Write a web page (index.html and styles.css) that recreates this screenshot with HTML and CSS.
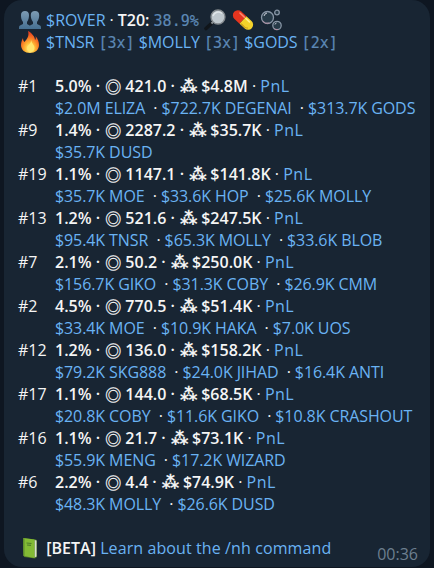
FILE: index.html
```
<!DOCTYPE html>
<html lang="en">
<head>
  <meta charset="UTF-8">
  <meta name="viewport" content="width=device-width, initial-scale=1.0">
  <title>$ROVER T20</title>
  <link rel="stylesheet" href="styles.css">
</head>
<body>
  <div class="message">
    <div class="line">
      <svg class="emoji" viewBox="0 0 22 22">
        <defs>
          <linearGradient id="people" x1="0" y1="0" x2="0" y2="1">
            <stop offset="0" stop-color="#7d9bb3"/>
            <stop offset="1" stop-color="#456f91"/>
          </linearGradient>
        </defs>
        <g fill="url(#people)">
          <path d="M6 2C3.500 2 2 3.500 2 6c0 2 .2 5 2 7v2l-3 1.500C0 17 0 18 0 20h12c0-2-.500-3-1.500-3.500L8 15v-2c1.700-2 2-5 2-7 0-2.500-1.500-4-4-4z"/>
          <path d="M16 2c-2.700 0-4.200 1.500-4.200 4 0 2 .4 5 2.200 7v2l-3 1.500c-1 .5-1 1.500-1 3.500h12c0-2 0-3-1-3.500L18 15v-2c1.800-2 2.200-5 2.200-7 0-2.500-1.500-4-4.200-4z"/>
        </g>
      </svg>
      <a class="link">$ROVER</a> · <b>T20:</b> <code>38.9%</code>
      <svg class="emoji" viewBox="0 0 22 22">
        <path d="M8.500 13.500l-6.500 6" stroke="#10151a" stroke-width="3.600" stroke-linecap="round"/>
        <path d="M10 12l-2.500 2.500" stroke="#8c9398" stroke-width="2"/>
        <circle cx="14" cy="8" r="7" fill="#bfc8ce" stroke="#83898d" stroke-width="1.300"/>
        <path d="M9 7a5.500 5.500 0 0 1 9-2.500" fill="none" stroke="#e1e6e9" stroke-width="1.500"/>
      </svg>
      <svg class="emoji" viewBox="0 0 22 22">
        <g transform="rotate(43 11 11)">
          <path d="M11 6H4a5 5 0 0 0 0 10h7z" fill="#e5351f"/>
          <path d="M11 6h7a5 5 0 0 1 0 10h-7z" fill="#f3d22b"/>
          <path d="M4 8h6" stroke="#ff8a70" stroke-width="1.500" stroke-linecap="round"/>
          <path d="M12 8h5" stroke="#fff08a" stroke-width="1.500" stroke-linecap="round"/>
          <path d="M12 15h5a4 4 0 0 0 3-1.500" stroke="#c9981a" fill="none"/>
        </g>
      </svg>
      <svg class="emoji" viewBox="0 0 22 22">
        <g fill="#263947" stroke="#8795a5" stroke-width="1.300">
          <circle cx="7.500" cy="8.500" r="6"/>
          <circle cx="17" cy="3.500" r="2.300"/>
          <circle cx="17" cy="16.500" r="4.200"/>
        </g>
        <path d="M4 7a4 4 0 0 1 3-3M15 15.500a2 2 0 0 1 1.500-1.500" fill="none" stroke="#c9cdd7"/>
        <path d="M2.500 12a6 6 0 0 0 7 2M14 19.500a4 4 0 0 0 4 1" fill="none" stroke="#b08b9f"/>
      </svg>
    </div>
    <div class="line">
      <svg class="emoji" viewBox="0 0 22 22">
        <defs>
          <radialGradient id="flame" cx=".5" cy=".8" r=".75">
            <stop offset="0" stop-color="#fff5a8"/>
            <stop offset=".35" stop-color="#ffbd36"/>
            <stop offset=".65" stop-color="#f87825"/>
            <stop offset="1" stop-color="#e33b20"/>
          </radialGradient>
        </defs>
        <path d="M9 0c4 2 7 6 7 9 1-1 1-2.500.500-4C19 8 20 11 20 14c0 5-4 8-9 8s-9-3-9-8c0-3 1-5 2-7 0 2 .5 3 1.500 4C8 8 10.500 5 9 0z" fill="url(#flame)"/>
        <path d="M12 9c.5 4-4 5-4 8 0 2 1.500 4 3.500 4s4-1.500 4-4c0-3-2.500-4-3.500-8z" fill="#ffe66d"/>
      </svg>
      <a class="link">$TNSR</a> <code>[3x]</code> <a class="link">$MOLLY</a> <code>[3x]</code> <a class="link">$GODS</a> <code>[2x]</code>
    </div>

    <div class="holders">
      <span>#1</span>
      <div><b>5.0% · <i class="sol">◎</i> 421.0 · <i class="stars">⁂</i> $4.8M</b> · <a class="link pnl">PnL</a></div>
      <div class="tokens"><a class="link">$2.0M ELIZA</a> &nbsp;· <a class="link">$722.7K DEGENAI</a> &nbsp;· <a class="link">$313.7K GODS</a></div>

      <span>#9</span>
      <div><b>1.4% · <i class="sol">◎</i> 2287.2 · <i class="stars">⁂</i> $35.7K</b> · <a class="link pnl">PnL</a></div>
      <div class="tokens"><a class="link">$35.7K DUSD</a></div>

      <span>#19</span>
      <div><b>1.1% · <i class="sol">◎</i> 1147.1 · <i class="stars">⁂</i> $141.8K</b> · <a class="link pnl">PnL</a></div>
      <div class="tokens"><a class="link">$35.7K MOE</a> &nbsp;· <a class="link">$33.6K HOP</a> &nbsp;· <a class="link">$25.6K MOLLY</a></div>

      <span>#13</span>
      <div><b>1.2% · <i class="sol">◎</i> 521.6 · <i class="stars">⁂</i> $247.5K</b> · <a class="link pnl">PnL</a></div>
      <div class="tokens"><a class="link">$95.4K TNSR</a> &nbsp;· <a class="link">$65.3K MOLLY</a> &nbsp;· <a class="link">$33.6K BLOB</a></div>

      <span>#7</span>
      <div><b>2.1% · <i class="sol">◎</i> 50.2 · <i class="stars">⁂</i> $250.0K</b> · <a class="link pnl">PnL</a></div>
      <div class="tokens"><a class="link">$156.7K GIKO</a> &nbsp;· <a class="link">$31.3K COBY</a> &nbsp;· <a class="link">$26.9K CMM</a></div>

      <span>#2</span>
      <div><b>4.5% · <i class="sol">◎</i> 770.5 · <i class="stars">⁂</i> $51.4K</b> · <a class="link pnl">PnL</a></div>
      <div class="tokens"><a class="link">$33.4K MOE</a> &nbsp;· <a class="link">$10.9K HAKA</a> &nbsp;· <a class="link">$7.0K UOS</a></div>

      <span>#12</span>
      <div><b>1.2% · <i class="sol">◎</i> 136.0 · <i class="stars">⁂</i> $158.2K</b> · <a class="link pnl">PnL</a></div>
      <div class="tokens"><a class="link">$79.2K SKG888</a> &nbsp;· <a class="link">$24.0K JIHAD</a> &nbsp;· <a class="link">$16.4K ANTI</a></div>

      <span>#17</span>
      <div><b>1.1% · <i class="sol">◎</i> 144.0 · <i class="stars">⁂</i> $68.5K</b> · <a class="link pnl">PnL</a></div>
      <div class="tokens"><a class="link">$20.8K COBY</a> &nbsp;· <a class="link">$11.6K GIKO</a> &nbsp;· <a class="link">$10.8K CRASHOUT</a></div>

      <span>#16</span>
      <div><b>1.1% · <i class="sol">◎</i> 21.7 · <i class="stars">⁂</i> $73.1K</b> · <a class="link pnl">PnL</a></div>
      <div class="tokens"><a class="link">$55.9K MENG</a> &nbsp;· <a class="link">$17.2K WIZARD</a></div>

      <span>#6</span>
      <div><b>2.2% · <i class="sol">◎</i> 4.4 · <i class="stars">⁂</i> $74.9K</b> · <a class="link pnl">PnL</a></div>
      <div class="tokens"><a class="link">$48.3K MOLLY</a> &nbsp;· <a class="link">$26.6K DUSD</a></div>
    </div>

    <div class="footer">
      <div>
        <svg class="emoji" viewBox="0 0 22 22">
          <path d="M4 1l13 1.500 1 1V20l-2 1.500L5 20z" fill="#4d7528"/>
          <path d="M15.500 3l2 .5v16l-2 1z" fill="#d9ddd2"/>
          <path d="M4 1l11.500 1.500v18.500L4.500 19z" fill="#83bb35"/>
          <path d="M4 1l1.500.200V19l-1-.200z" fill="#5c8d2b"/>
          <path d="M7.500 6l5 .5M8 8l4 .400" stroke="#4f7d2b" stroke-width="1.200"/>
        </svg>
        <b>[BETA]</b> <a class="link">Learn about the /nh command</a>
      </div>
      <span class="time">00:36</span>
    </div>
  </div>
</body>
</html>
```
FILE: styles.css
```
body {
  margin: 0;
  height: 568px;
  overflow: hidden;
  background: #0e1621;
  color: #f5f5f5;
  font-family: "Open Sans", "Noto Sans", sans-serif;
  font-size: 16px;
  line-height: 22px;
}
.message {
  box-sizing: border-box;
  width: 426px;
  height: 567px;
  margin-left: 4px;
  padding: 9px 12px 0 14px;
  border-radius: 18px;
  background: #182533;
  white-space: nowrap;
}
.line {
  height: 22px;
  letter-spacing: -0.07px;
}
.link {
  color: #6ab3f3;
}
b {
  font-weight: 600;
  letter-spacing: 0;
}
code {
  color: #5c88b5;
  font-family: "DejaVu Sans Mono", monospace;
  font-size: 15px;
  line-height: 20px;
  letter-spacing: 0;
  -webkit-text-stroke: 0.2px #5c88b5;
}
.emoji {
  width: 22px;
  height: 22px;
  margin: 0 1px;
  vertical-align: top;
}
.holders {
  display: grid;
  grid-template-columns: 37px 1fr;
  grid-auto-rows: 22px;
  margin: 22px 0;
}
.tokens {
  grid-column: 2;
  letter-spacing: -0.09px;
}
.sol,
.stars {
  display: inline-block;
  width: 16px;
  height: 22px;
  margin-left: 1px;
  font-style: normal;
  vertical-align: top;
}
.sol {
  font-family: "Noto Sans CJK JP", sans-serif;
  font-weight: 400;
  -webkit-text-stroke: 0.3px #f5f5f5;
}
.stars {
  width: 17px;
  font-family: "DejaVu Sans", sans-serif;
  font-size: 17px;
  font-weight: 700;
  -webkit-text-stroke: 0.15px #f5f5f5;
}
.pnl {
  letter-spacing: 0.5px;
}
.footer {
  display: flex;
  justify-content: space-between;
  letter-spacing: 0.1px;
}
.time {
  margin-top: 6px;
  color: #6d7f8f;
  letter-spacing: 0;
}
```
